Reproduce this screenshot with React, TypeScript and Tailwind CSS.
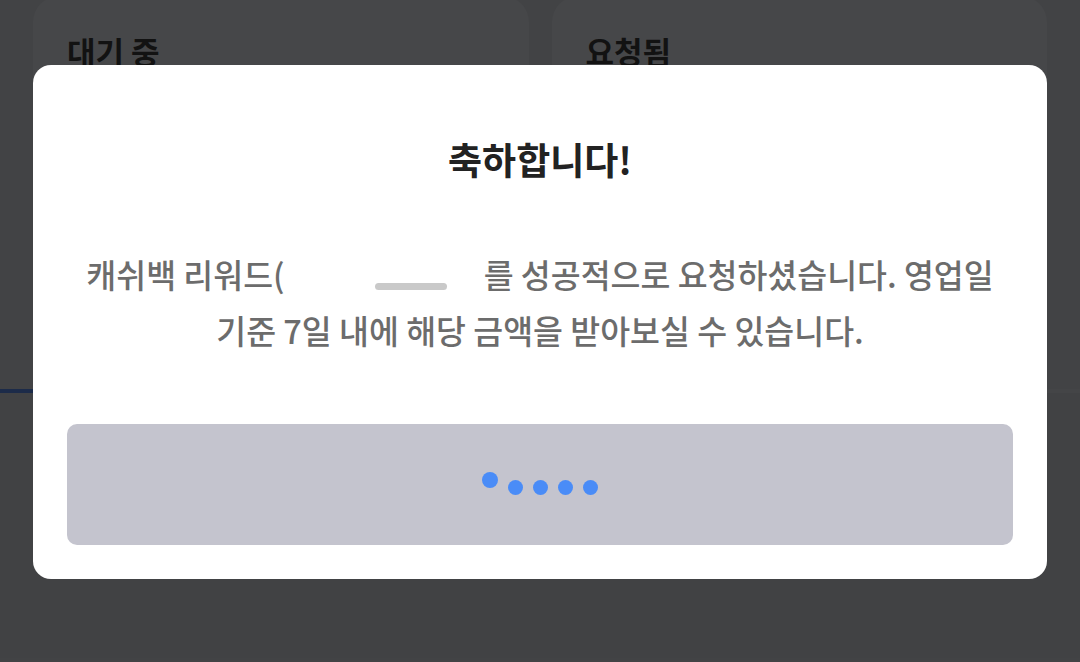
import React from 'react'

const font = { fontFamily: '"Noto Sans CJK KR", "Noto Sans", sans-serif' }

function StatusCard({ title }: { title: string }) {
  return (
    <div className="flex-1 h-[262px] rounded-b-[26px] rounded-t-[26px] bg-[#464749] px-[34px] pt-[34px] -mt-[4px]">
      <h2 className="text-[31px] font-bold text-[#121212] leading-[42px]">{title}</h2>
    </div>
  )
}

function LoadingDots() {
  return (
    <div className="flex items-center gap-[10px] pt-[5px]">
      <span className="block w-[16px] h-[16px] rounded-full bg-[#4a8cf7] -translate-y-[7px]" />
      <span className="block w-[15px] h-[15px] rounded-full bg-[#4a8cf7]" />
      <span className="block w-[15px] h-[15px] rounded-full bg-[#4a8cf7]" />
      <span className="block w-[15px] h-[15px] rounded-full bg-[#4a8cf7]" />
      <span className="block w-[15px] h-[15px] rounded-full bg-[#4a8cf7]" />
    </div>
  )
}

export default function App() {
  return (
    <div className="relative w-[1080px] h-[662px] overflow-hidden bg-[#424345]" style={font}>
      {/* dimmed page behind the dialog */}
      <div className="flex gap-[23px] px-[33px]">
        <StatusCard title="대기 중" />
        <StatusCard title="요청됨" />
      </div>
      <div className="h-[131px]" />
      <div className="flex">
        <div className="w-[540px] h-[4px] bg-[#1c2b49]" />
        <div className="flex-1 h-[4px] bg-[#444547]" />
      </div>
      <div className="h-[265px] bg-[#414244]" />

      {/* dialog */}
      <div className="absolute inset-0 flex items-start justify-center pt-[65px] px-[33px]">
        <div className="w-full bg-white rounded-[18px] flex flex-col items-center pt-[70px] px-[34px] pb-[34px]">
          <h1 className="text-[37px] font-bold text-[#222222] leading-[48px]">축하합니다!</h1>
          <p className="mt-[63px] text-[32.5px] font-medium leading-[56px] text-[#6c6c6c] text-center whitespace-nowrap">
            캐쉬백 리워드(
            <span className="inline-block w-[199px] h-[56px] align-top relative">
              <span className="absolute left-[90px] top-[37px] w-[72px] h-[7px] rounded-full bg-[#c9c9c9]" />
            </span>
            를 성공적으로 요청하셨습니다. 영업일
            <br />
            기준 7일 내에 해당 금액을 받아보실 수 있습니다.
          </p>
          <button className="mt-[66px] w-full h-[121px] rounded-[10px] bg-[#c4c4ce] flex items-center justify-center">
            <LoadingDots />
          </button>
        </div>
      </div>
    </div>
  )
}
